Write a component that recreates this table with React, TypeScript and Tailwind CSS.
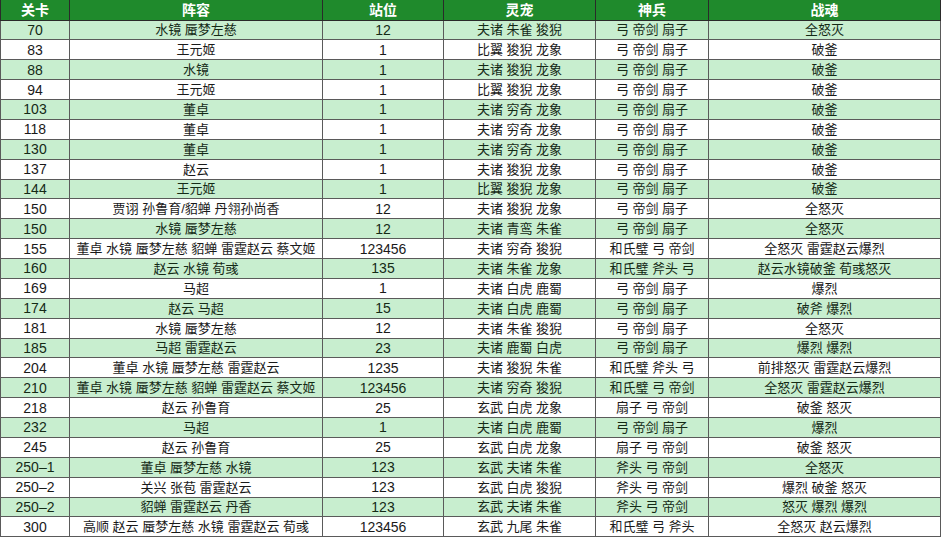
const rows: string[][] = [
  ['70', '水镜 蜃梦左慈', '12', '夫诸 朱雀 狻猊', '弓 帝剑 扇子', '全怒灭'],
  ['83', '王元姬', '1', '比翼 狻猊 龙象', '弓 帝剑 扇子', '破釜'],
  ['88', '水镜', '1', '夫诸 狻猊 龙象', '弓 帝剑 扇子', '破釜'],
  ['94', '王元姬', '1', '比翼 狻猊 龙象', '弓 帝剑 扇子', '破釜'],
  ['103', '董卓', '1', '夫诸 穷奇 龙象', '弓 帝剑 扇子', '破釜'],
  ['118', '董卓', '1', '夫诸 穷奇 龙象', '弓 帝剑 扇子', '破釜'],
  ['130', '董卓', '1', '夫诸 穷奇 龙象', '弓 帝剑 扇子', '破釜'],
  ['137', '赵云', '1', '夫诸 狻猊 龙象', '弓 帝剑 扇子', '破釜'],
  ['144', '王元姬', '1', '比翼 狻猊 龙象', '弓 帝剑 扇子', '破釜'],
  ['150', '贾诩 孙鲁育/貂蝉 丹翎孙尚香', '12', '夫诸 狻猊 龙象', '弓 帝剑 扇子', '全怒灭'],
  ['150', '水镜 蜃梦左慈', '12', '夫诸 青鸾 朱雀', '弓 帝剑 扇子', '全怒灭'],
  ['155', '董卓 水镜 蜃梦左慈 貂蝉 雷霆赵云 蔡文姬', '123456', '夫诸 穷奇 狻猊', '和氏璧 弓 帝剑', '全怒灭 雷霆赵云爆烈'],
  ['160', '赵云 水镜 荀彧', '135', '夫诸 朱雀 龙象', '和氏璧 斧头 弓', '赵云水镜破釜 荀彧怒灭'],
  ['169', '马超', '1', '夫诸 白虎 鹿蜀', '弓 帝剑 扇子', '爆烈'],
  ['174', '赵云 马超', '15', '夫诸 白虎 鹿蜀', '弓 帝剑 扇子', '破斧 爆烈'],
  ['181', '水镜 蜃梦左慈', '12', '夫诸 朱雀 狻猊', '弓 帝剑 扇子', '全怒灭'],
  ['185', '马超 雷霆赵云', '23', '夫诸 鹿蜀 白虎', '弓 帝剑 扇子', '爆烈 爆烈'],
  ['204', '董卓 水镜 蜃梦左慈 雷霆赵云', '1235', '夫诸 狻猊 朱雀', '和氏璧 斧头 弓', '前排怒灭 雷霆赵云爆烈'],
  ['210', '董卓 水镜 蜃梦左慈 貂蝉 雷霆赵云 蔡文姬', '123456', '夫诸 穷奇 狻猊', '和氏璧 弓 帝剑', '全怒灭 雷霆赵云爆烈'],
  ['218', '赵云 孙鲁育', '25', '玄武 白虎 龙象', '扇子 弓 帝剑', '破釜 怒灭'],
  ['232', '马超', '1', '夫诸 白虎 鹿蜀', '弓 帝剑 扇子', '爆烈'],
  ['245', '赵云 孙鲁育', '25', '玄武 白虎 龙象', '扇子 弓 帝剑', '破釜 怒灭'],
  ['250–1', '董卓 蜃梦左慈 水镜', '123', '玄武 夫诸 朱雀', '斧头 弓 帝剑', '全怒灭'],
  ['250–2', '关兴 张苞 雷霆赵云', '123', '玄武 白虎 狻猊', '斧头 弓 帝剑', '爆烈 破釜 怒灭'],
  ['250–2', '貂蝉 雷霆赵云 丹香', '123', '玄武 夫诸 朱雀', '斧头 弓 帝剑', '怒灭 爆烈 爆烈'],
  ['300', '高顺 赵云 蜃梦左慈 水镜 雷霆赵云 荀彧', '123456', '玄武 九尾 朱雀', '和氏璧 弓 斧头', '全怒灭 赵云爆烈'],
];

const headers = ['关卡', '阵容', '站位', '灵宠', '神兵', '战魂'];
const widths = ['w-[69px]', 'w-[253px]', 'w-[121px]', 'w-[152px]', 'w-[113px]', 'w-[232px]'];

export default function App() {
  return (
    <div className="w-[942px] h-[541px] bg-white overflow-hidden font-['Liberation_Sans','Noto_Sans_CJK_SC',sans-serif]">
      <table className="w-[940px] table-fixed border-collapse">
        <colgroup>
          {widths.map((w, i) => (
            <col key={i} className={w} />
          ))}
        </colgroup>
        <thead>
          <tr className="h-[20px] bg-[#1f8a2c]">
            {headers.map((h) => (
              <th
                key={h}
                className="p-0 border-x border-b border-[#2a2a2a] text-[14px] leading-none font-bold text-white text-center"
              >
                {h}
              </th>
            ))}
          </tr>
        </thead>
        <tbody>
          {rows.map((r, i) => (
            <tr
              key={i}
              className={`h-[19.88px] ${i % 2 === 0 ? 'bg-[#c8eecf] text-[#142a16]' : 'bg-white text-[#1a1a1a]'}`}
            >
              {r.map((c, j) =>
                j === 0 || j === 2 ? (
                  <td
                    key={j}
                    className="p-0 border border-[#5a5a5a] text-[14px] leading-none text-center whitespace-nowrap overflow-hidden font-['Liberation_Sans_Narrow','Liberation_Sans',sans-serif]"
                  >
                    {c}
                  </td>
                ) : (
                  <td
                    key={j}
                    className="p-0 border border-[#5a5a5a] text-[13px] leading-none text-center whitespace-nowrap overflow-hidden"
                  >
                    {c}
                  </td>
                )
              )}
            </tr>
          ))}
        </tbody>
      </table>
    </div>
  );
}
